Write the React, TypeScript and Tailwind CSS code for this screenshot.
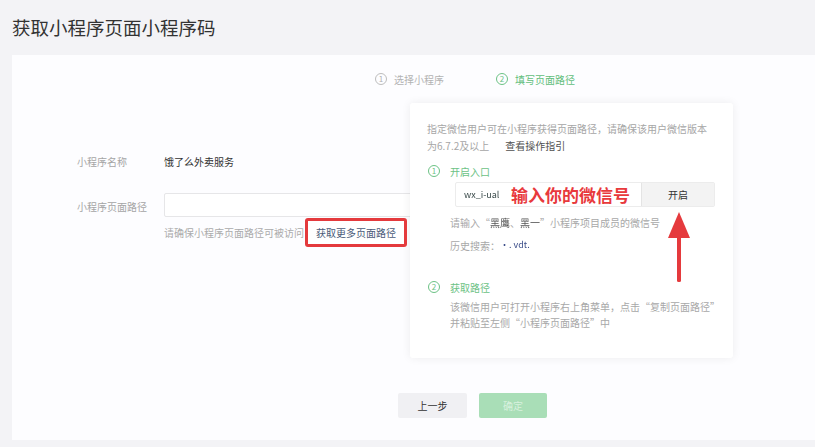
import React from 'react';

function StepNum({ n, green }: { n: number; green?: boolean }) {
  return (
    <span
      className={`flex h-[12px] w-[12px] shrink-0 items-center justify-center rounded-full border text-[8px] leading-none ${
        green ? 'border-[#6cc285] text-[#6cc285]' : 'border-[#bdbdbd] text-[#b0b0b0]'
      }`}
    >
      {n}
    </span>
  );
}

export default function App() {
  return (
    <div className="h-[447px] w-[815px] overflow-hidden bg-[#f3f3f6] font-['Noto_Sans_CJK_SC',sans-serif]">
      <h1 className="flex h-[55px] items-center pl-[12px] text-[18.5px] font-normal text-[#333]">
        获取小程序页面小程序码
      </h1>

      <div className="relative ml-[12px] h-[385px] bg-[#fdfdff] pt-[17px]">
        {/* steps */}
        <div className="flex h-[14px] items-center pl-[363px] text-[10px]">
          <div className="flex items-center gap-[7px] text-[#b3b3b3]">
            <StepNum n={1} />
            <span>选择小程序</span>
          </div>
          <div className="ml-[52px] flex items-center gap-[7px] text-[#62bd7b]">
            <StepNum n={2} green />
            <span>填写页面路径</span>
          </div>
        </div>

        {/* form */}
        <div className="pl-[65px] text-[10px]">
          <div className="mt-[68px] flex h-[14px] items-center">
            <span className="w-[87px] text-[#a5a5a5]">小程序名称</span>
            <span className="text-[#333]">饿了么外卖服务</span>
          </div>
          <div className="mt-[25px] flex h-[24px] items-center">
            <span className="w-[87px] pt-[3px] text-[#a5a5a5]">小程序页面路径</span>
            <div className="h-[24px] w-[300px] rounded-[2px] border border-[#e6e6e8] bg-white" />
          </div>
          <div className="mt-[1px] flex h-[29px] items-center pl-[87px]">
            <span className="text-[#ababab]">请确保小程序页面路径可被访问</span>
            <span className="relative z-10 ml-[1px] flex h-[29px] items-center rounded-[3px] border-[3px] border-[#e43a3d] bg-white px-[8px] text-[#4a5a78]">
              获取更多页面路径
            </span>
          </div>
        </div>

        {/* bottom buttons */}
        <div className="mt-[146px] flex gap-[12px] pl-[386px] text-[10px]">
          <button className="h-[25px] w-[69px] rounded-[2px] bg-[#f0f0f3] text-[#333]">上一步</button>
          <button className="h-[25px] w-[68px] rounded-[2px] bg-[#a9deb7] text-[#d8f1de]">确定</button>
        </div>

        {/* popover */}
        <div className="absolute left-[398px] top-[48px] h-[255px] w-[323px] rounded-[3px] bg-white pl-[17px] pt-[17px] text-[10px] shadow-[0_0_10px_rgba(0,0,0,0.07)]">
          <p className="leading-[17px] text-[#a6a6a6]">
            指定微信用户可在小程序获得页面路径，请确保该用户微信版本
            <br />
            为6.7.2及以上
            <span className="ml-[16px] text-[#4f4f4f]">查看操作指引</span>
          </p>

          <div className="mt-[11px] flex h-[12px] items-center gap-[10px] pl-[1px]">
            <StepNum n={1} green />
            <span className="text-[#6cc285]">开启入口</span>
          </div>

          <div className="ml-[28px] mt-[5px] flex h-[25px] w-[260px] rounded-[2px] border border-[#ececec] bg-white">
            <div className="flex flex-1 items-center pl-[8px]">
              <span className="w-[40px] text-[9px] tracking-[0px] text-[#3a4a4a] blur-[0.6px]">wx_i-ual</span>
              <span className="ml-[7px] bg-white text-[17px] font-bold leading-none text-[#e8393c]">
                输入你的微信号
              </span>
            </div>
            <button className="w-[73px] border-l border-[#e4e4e4] bg-[#f3f3f3] text-[10px] text-[#333]">开启</button>
          </div>

          <div className="ml-[23px] mt-[8px] flex h-[14px] items-center text-[#a8a8a8]">
            请输入“
            <span className="text-[#555] blur-[0.5px]">黑鹰</span>、
            <span className="text-[#555] blur-[0.5px]">黑一</span>
            ”小程序项目成员的微信号
          </div>
          <div className="ml-[23px] mt-[9px] flex h-[14px] items-center text-[#a8a8a8]">
            历史搜索：
            <span className="text-[9px] text-[#3d4f8a] blur-[0.5px]">•. vdt.</span>
          </div>

          <div className="mt-[29px] flex h-[12px] items-center gap-[10px] pl-[1px]">
            <StepNum n={2} green />
            <span className="text-[#6cc285]">获取路径</span>
          </div>
          <p className="ml-[23px] mt-[6px] leading-[16px] text-[#a8a8a8]">
            该微信用户可打开小程序右上角菜单，点击“复制页面路径”
            <br />
            并粘贴至左侧“小程序页面路径”中
          </p>

          {/* red arrow annotation */}
          <svg className="absolute left-[257px] top-[107px]" width="24" height="72" viewBox="0 0 24 72">
            <polygon points="12,2 1,28 23,28" fill="#e53a3d" />
            <rect x="10" y="26" width="4" height="46" rx="1.5" fill="#e53a3d" />
          </svg>
        </div>
      </div>
    </div>
  );
}
